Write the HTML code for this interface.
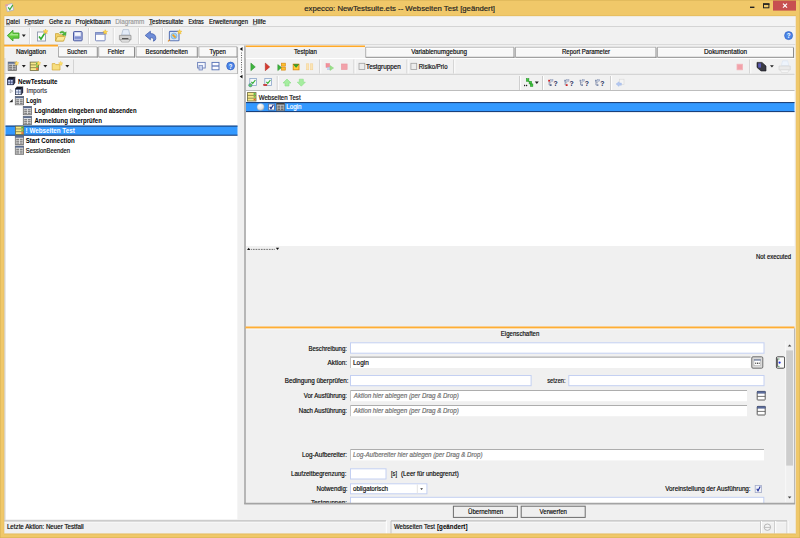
<!DOCTYPE html>
<html lang="de">
<head>
<meta charset="utf-8">
<title>expecco: NewTestsuite.ets -- Webseiten Test [geändert]</title>
<style>
html,body{margin:0;padding:0;background:#F0C869;overflow:hidden;}
body{width:800px;height:538px;font-family:"Liberation Sans",sans-serif;}
svg{display:block;position:absolute;left:0;top:0;}
svg text{font-family:"Liberation Sans",sans-serif;white-space:pre;}
</style>
</head>
<body>
<svg width="800" height="538" viewBox="0 0 800 538">
<rect x="0" y="0" width="800" height="538" fill="#F0C869" />
<rect x="4" y="16" width="792" height="518" fill="#F0F0F0" />
<text x="304.3" y="10.6" textLength="190.7" lengthAdjust="spacingAndGlyphs" fill="#222" style="font-size:8px;" stroke="#222" stroke-width="0.18" >expecco: NewTestsuite.ets -- Webseiten Test [geändert]</text>
<rect x="6.4" y="4.2" width="6.6" height="6.8" fill="#F6F6FA" stroke="#A8AEC0" stroke-width="0.7" transform="rotate(-14 9.5 7.5)"/>
<rect x="6" y="3.6" width="2.4" height="2" fill="#E8A0A0" transform="rotate(-14 9.5 7.5)"/>
<path d="M8.2 7.4 L9.8 9.6 L12.8 5" fill="none" stroke="#3DAA3D" stroke-width="1.3" />
<rect x="773" y="0" width="23" height="10.6" fill="#C75050" />
<path d="M783 3.6 L787 7.6 M787 3.6 L783 7.6" fill="none" stroke="#FFFFFF" stroke-width="1.2" />
<rect x="750" y="6.6" width="4.4" height="1.4" fill="#222" />
<rect x="763.5" y="3.8" width="5.4" height="4" fill="none" stroke="#222" stroke-width="1" />
<line x1="763" y1="4.2" x2="769.4" y2="4.2" stroke="#222" stroke-width="1.4" />
<rect x="4" y="16" width="792" height="10.5" fill="#F3F3F3" />
<line x1="4" y1="26.5" x2="796" y2="26.5" stroke="#D4D4D4" stroke-width="1" />
<text x="6" y="23.6" textLength="13.75" lengthAdjust="spacingAndGlyphs" fill="#0a0a0a" style="font-size:7px;" stroke="#0a0a0a" stroke-width="0.18" >Datei</text>
<text x="24.5" y="23.6" textLength="19.5" lengthAdjust="spacingAndGlyphs" fill="#0a0a0a" style="font-size:7px;" stroke="#0a0a0a" stroke-width="0.18" >Fenster</text>
<text x="49" y="23.6" textLength="21.6" lengthAdjust="spacingAndGlyphs" fill="#0a0a0a" style="font-size:7px;" stroke="#0a0a0a" stroke-width="0.18" >Gehe zu</text>
<text x="75.5" y="23.6" textLength="35.1" lengthAdjust="spacingAndGlyphs" fill="#0a0a0a" style="font-size:7px;" stroke="#0a0a0a" stroke-width="0.18" >Projektbaum</text>
<text x="115.25" y="23.6" textLength="29.15" lengthAdjust="spacingAndGlyphs" fill="#9a9a9a" style="font-size:7px;" stroke="#9a9a9a" stroke-width="0.18" >Diagramm</text>
<text x="149" y="23.6" textLength="34.5" lengthAdjust="spacingAndGlyphs" fill="#0a0a0a" style="font-size:7px;" stroke="#0a0a0a" stroke-width="0.18" >Testresultate</text>
<text x="188.5" y="23.6" textLength="15.25" lengthAdjust="spacingAndGlyphs" fill="#0a0a0a" style="font-size:7px;" stroke="#0a0a0a" stroke-width="0.18" >Extras</text>
<text x="209" y="23.6" textLength="39" lengthAdjust="spacingAndGlyphs" fill="#0a0a0a" style="font-size:7px;" stroke="#0a0a0a" stroke-width="0.18" >Erweiterungen</text>
<text x="252.75" y="23.6" textLength="13.25" lengthAdjust="spacingAndGlyphs" fill="#0a0a0a" style="font-size:7px;" stroke="#0a0a0a" stroke-width="0.18" >Hilfe</text>
<line x1="6" y1="24.7" x2="10" y2="24.7" stroke="#333" stroke-width="0.6" />
<line x1="27.4" y1="24.7" x2="30.6" y2="24.7" stroke="#333" stroke-width="0.6" />
<line x1="149" y1="24.7" x2="152.4" y2="24.7" stroke="#333" stroke-width="0.6" />
<line x1="252.75" y1="24.7" x2="256.6" y2="24.7" stroke="#333" stroke-width="0.6" />
<rect x="4" y="27" width="792" height="17.5" fill="#F1F1F1" />
<line x1="4" y1="44.5" x2="796" y2="44.5" stroke="#DADADA" stroke-width="1" />
<line x1="29.5" y1="28" x2="29.5" y2="44" stroke="#D8D8D8" stroke-width="1" />
<line x1="30.5" y1="28" x2="30.5" y2="44" stroke="#FFFFFF" stroke-width="1" />
<line x1="88.5" y1="28" x2="88.5" y2="44" stroke="#D8D8D8" stroke-width="1" />
<line x1="89.5" y1="28" x2="89.5" y2="44" stroke="#FFFFFF" stroke-width="1" />
<line x1="113.3" y1="28" x2="113.3" y2="44" stroke="#D8D8D8" stroke-width="1" />
<line x1="114.3" y1="28" x2="114.3" y2="44" stroke="#FFFFFF" stroke-width="1" />
<line x1="138.5" y1="28" x2="138.5" y2="44" stroke="#D8D8D8" stroke-width="1" />
<line x1="139.5" y1="28" x2="139.5" y2="44" stroke="#FFFFFF" stroke-width="1" />
<line x1="162.5" y1="28" x2="162.5" y2="44" stroke="#D8D8D8" stroke-width="1" />
<line x1="163.5" y1="28" x2="163.5" y2="44" stroke="#FFFFFF" stroke-width="1" />
<path d="M7.3 35.6 L13 30.2 L13 33 L19 33 L19 38.2 L13 38.2 L13 41 Z" fill="#62CC3E" stroke="#3C9C28" stroke-width="0.8" stroke-linejoin="round"/>
<path d="M9 35.4 L12.4 32.2 L12.4 34 L18 34 L18 35.4 Z" fill="#A6E88A" />
<path d="M21.8 34.4 L25.8 34.4 L23.8 37.1 Z" fill="#222" />
<rect x="37.5" y="32" width="8" height="9" fill="#FBFBFD" stroke="#8E98AC" stroke-width="0.9" />
<path d="M39 36.4 L41 39 L44.6 33.4" fill="none" stroke="#2FAE2F" stroke-width="1.6" />
<polygon points="45.60,29.00 46.29,30.65 48.07,30.80 46.71,31.96 47.13,33.70 45.60,32.77 44.07,33.70 44.49,31.96 43.13,30.80 44.91,30.65" fill="#FFD84A" stroke="#E0A820" stroke-width="0.4"/>
<path d="M55.5 41 L55.5 33.6 L58.6 33.6 L59.4 34.8 L63.6 34.8 L63.6 41 Z" fill="#F3D36B" stroke="#C9A12E" stroke-width="0.7" />
<path d="M55.5 41 L57.4 36.4 L65.4 36.4 L63.6 41 Z" fill="#FBE89A" stroke="#C9A12E" stroke-width="0.7" />
<path d="M59.6 32.6 Q62.6 29.6 65 32.8 L66.2 31.8 L65.8 35.6 L62.2 34.8 L63.6 33.8 Q62.2 32 60.6 33.2 Z" fill="#4DBB3C" stroke="#2F8E27" stroke-width="0.4" />
<rect x="73.5" y="31.6" width="8.6" height="9.2" fill="#B4BEE6" stroke="#4A5AA2" stroke-width="1" rx="0.8"/>
<rect x="75" y="32.4" width="5.6" height="3.4" fill="#F4F6FC" />
<rect x="74.6" y="36.6" width="6.4" height="2.2" fill="#7F8FCF" />
<rect x="95.5" y="32.6" width="9.6" height="8.2" fill="#FCFCFE" stroke="#6E7FB8" stroke-width="0.9" rx="0.8"/>
<rect x="95.5" y="32.6" width="9.6" height="1.8" fill="#8FA0D4" stroke="#6E7FB8" stroke-width="0.5" />
<polygon points="105.20,29.70 105.86,31.29 107.58,31.43 106.27,32.55 106.67,34.22 105.20,33.33 103.73,34.22 104.13,32.55 102.82,31.43 104.54,31.29" fill="#FFD84A" stroke="#E0A820" stroke-width="0.4"/>
<path d="M121.6 35 L123 29.6 L128.6 29.6 L129.8 35 Z" fill="#E4ECF8" stroke="#9FB0C8" stroke-width="0.6" />
<path d="M119.4 35.4 L131 35.4 L131 39.8 L119.4 39.8 Z" fill="#D2D2D2" stroke="#8C8C8C" stroke-width="0.7" stroke-linejoin="round"/>
<path d="M120.4 39.8 L130 39.8 L128.8 42 L121.6 42 Z" fill="#F2F2F2" stroke="#8C8C8C" stroke-width="0.6" />
<rect x="122" y="38" width="6.4" height="1.2" fill="#555" />
<path d="M145.2 35.4 L150.4 31.2 L150.4 33.6 Q156 33.6 155.8 38.6 Q155.6 40.6 153.4 41.2 Q154.6 37.6 150.4 37.6 L150.4 39.8 Z" fill="#6D8CD8" stroke="#3C57A8" stroke-width="0.7" stroke-linejoin="round"/>
<rect x="169.4" y="31.4" width="9.6" height="9.4" fill="#DCE8F6" stroke="#5F79B8" stroke-width="1.1" rx="0.8"/>
<circle cx="174" cy="36" r="3" fill="#9FD0F0" stroke="#6AA0D0" stroke-width="0.5"/>
<path d="M172.6 34.6 L175.6 37.6" fill="none" stroke="#F0A020" stroke-width="1.6" />
<polygon points="179.60,29.50 180.26,31.09 181.98,31.23 180.67,32.35 181.07,34.02 179.60,33.12 178.13,34.02 178.53,32.35 177.22,31.23 178.94,31.09" fill="#FFD84A" stroke="#E0A820" stroke-width="0.4"/>
<path d="M168 41.4 L170 39.6" fill="none" stroke="#E08A20" stroke-width="1.2" />
<circle cx="788.6" cy="35.6" r="4" fill="#4C86E8" stroke="#2F5FC0" stroke-width="0.7"/>
<text x="786.7" y="38.2" textLength="3.8" lengthAdjust="spacingAndGlyphs" fill="#FFFFFF" style="font-size:7px;font-weight:bold;" >?</text>
<rect x="4" y="45" width="54" height="13.5" fill="#F1F1F1" />
<line x1="4" y1="45.8" x2="58" y2="45.8" stroke="#FFA928" stroke-width="1.9" />
<line x1="4" y1="47.2" x2="58" y2="47.2" stroke="#FAFAFA" stroke-width="1" />
<rect x="58.5" y="47.1" width="38.8" height="9.899999999999999" fill="#F8F8F8" rx="0.8"/>
<line x1="58.5" y1="46.9" x2="97.3" y2="46.9" stroke="#B4B4B4" stroke-width="1" />
<line x1="58.5" y1="46.6" x2="58.5" y2="57.0" stroke="#B0B0B0" stroke-width="1" />
<line x1="59" y1="47.9" x2="96.3" y2="47.9" stroke="#FFFFFF" stroke-width="0.8" />
<line x1="58.5" y1="57.0" x2="97.8" y2="57.0" stroke="#8C8C8C" stroke-width="1" />
<line x1="97.3" y1="47.1" x2="97.3" y2="57.5" stroke="#8C8C8C" stroke-width="1" />
<rect x="98.7" y="47.1" width="35.8" height="9.899999999999999" fill="#F8F8F8" rx="0.8"/>
<line x1="98.7" y1="46.9" x2="134.5" y2="46.9" stroke="#B4B4B4" stroke-width="1" />
<line x1="98.7" y1="46.6" x2="98.7" y2="57.0" stroke="#B0B0B0" stroke-width="1" />
<line x1="99.2" y1="47.9" x2="133.5" y2="47.9" stroke="#FFFFFF" stroke-width="0.8" />
<line x1="98.7" y1="57.0" x2="135" y2="57.0" stroke="#8C8C8C" stroke-width="1" />
<line x1="134.5" y1="47.1" x2="134.5" y2="57.5" stroke="#8C8C8C" stroke-width="1" />
<rect x="136.1" y="47.1" width="61.20000000000002" height="9.899999999999999" fill="#F8F8F8" rx="0.8"/>
<line x1="136.1" y1="46.9" x2="197.3" y2="46.9" stroke="#B4B4B4" stroke-width="1" />
<line x1="136.1" y1="46.6" x2="136.1" y2="57.0" stroke="#B0B0B0" stroke-width="1" />
<line x1="136.6" y1="47.9" x2="196.3" y2="47.9" stroke="#FFFFFF" stroke-width="0.8" />
<line x1="136.1" y1="57.0" x2="197.8" y2="57.0" stroke="#8C8C8C" stroke-width="1" />
<line x1="197.3" y1="47.1" x2="197.3" y2="57.5" stroke="#8C8C8C" stroke-width="1" />
<rect x="198.9" y="47.1" width="38.19999999999999" height="9.899999999999999" fill="#F8F8F8" rx="0.8"/>
<line x1="198.9" y1="46.9" x2="237.1" y2="46.9" stroke="#B4B4B4" stroke-width="1" />
<line x1="198.9" y1="46.6" x2="198.9" y2="57.0" stroke="#B0B0B0" stroke-width="1" />
<line x1="199.4" y1="47.9" x2="236.1" y2="47.9" stroke="#FFFFFF" stroke-width="0.8" />
<line x1="198.9" y1="57.0" x2="237.6" y2="57.0" stroke="#8C8C8C" stroke-width="1" />
<line x1="237.1" y1="47.1" x2="237.1" y2="57.5" stroke="#8C8C8C" stroke-width="1" />
<text x="16" y="54" textLength="30" lengthAdjust="spacingAndGlyphs" fill="#0a0a0a" style="font-size:7px;" stroke="#0a0a0a" stroke-width="0.18" >Navigation</text>
<text x="67" y="54" textLength="20" lengthAdjust="spacingAndGlyphs" fill="#0a0a0a" style="font-size:7px;" stroke="#0a0a0a" stroke-width="0.18" >Suchen</text>
<text x="107.75" y="54" textLength="16.65" lengthAdjust="spacingAndGlyphs" fill="#0a0a0a" style="font-size:7px;" stroke="#0a0a0a" stroke-width="0.18" >Fehler</text>
<text x="145.6" y="54" textLength="42.4" lengthAdjust="spacingAndGlyphs" fill="#0a0a0a" style="font-size:7px;" stroke="#0a0a0a" stroke-width="0.18" >Besonderheiten</text>
<text x="209.4" y="54" textLength="16.6" lengthAdjust="spacingAndGlyphs" fill="#0a0a0a" style="font-size:7px;" stroke="#0a0a0a" stroke-width="0.18" >Typen</text>
<rect x="4" y="58.5" width="234" height="15.5" fill="#F1F1F1" />
<line x1="58" y1="58.5" x2="238" y2="58.5" stroke="#FAFAFA" stroke-width="1" />
<line x1="4" y1="73.5" x2="238" y2="73.5" stroke="#C8C8C8" stroke-width="1" />
<line x1="237.5" y1="58" x2="237.5" y2="74" stroke="#B8B8B8" stroke-width="1" />
<line x1="73.5" y1="59.5" x2="73.5" y2="73" stroke="#D4D4D4" stroke-width="1" />
<rect x="8.2" y="62.1" width="8.4" height="8.4" fill="#D4D4D4" stroke="#6A6A6A" stroke-width="0.8" />
<rect x="8.2" y="62.1" width="8.4" height="1.7" fill="#56688C" />
<line x1="8.6" y1="64.2" x2="16.200000000000003" y2="64.2" stroke="#C8D0E0" stroke-width="0.5" />
<rect x="9.1" y="64.8" width="2.9000000000000004" height="1.3333333333333333" fill="#7A7A7A" />
<rect x="9.1" y="66.63333333333333" width="2.9000000000000004" height="1.3333333333333333" fill="#7A7A7A" />
<rect x="9.1" y="68.46666666666667" width="2.9000000000000004" height="1.3333333333333333" fill="#7A7A7A" />
<rect x="12.8" y="64.8" width="2.9000000000000004" height="1.3333333333333333" fill="#7A7A7A" />
<rect x="12.8" y="66.63333333333333" width="2.9000000000000004" height="1.3333333333333333" fill="#7A7A7A" />
<rect x="12.8" y="68.46666666666667" width="2.9000000000000004" height="1.3333333333333333" fill="#7A7A7A" />
<polygon points="16.70,61.10 17.31,62.56 18.89,62.69 17.68,63.72 18.05,65.26 16.70,64.44 15.35,65.26 15.72,63.72 14.51,62.69 16.09,62.56" fill="#FFE269" stroke="#F0C040" stroke-width="0.4"/>
<path d="M21.8 64.9 L25.8 64.9 L23.8 67.60000000000001 Z" fill="#222" />
<rect x="30.2" y="62.1" width="8.3" height="8.3" fill="#F6E889" stroke="#6E6A3A" stroke-width="0.8" />
<line x1="30.2" y1="64.86666666666667" x2="38.5" y2="64.86666666666667" stroke="#6E6A3A" stroke-width="0.7" />
<line x1="30.2" y1="67.63333333333334" x2="38.5" y2="67.63333333333334" stroke="#6E6A3A" stroke-width="0.7" />
<rect x="36.1" y="62.7" width="1.9" height="1.566666666666667" fill="#3FB83F" />
<rect x="36.1" y="65.46666666666667" width="1.9" height="1.566666666666667" fill="#7AC43C" />
<rect x="36.1" y="68.23333333333333" width="1.9" height="1.566666666666667" fill="#E8622A" />
<polygon points="38.70,61.10 39.31,62.56 40.89,62.69 39.68,63.72 40.05,65.26 38.70,64.44 37.35,65.26 37.72,63.72 36.51,62.69 38.09,62.56" fill="#FFE269" stroke="#F0C040" stroke-width="0.4"/>
<path d="M43.3 64.9 L47.3 64.9 L45.3 67.60000000000001 Z" fill="#222" />
<path d="M52.2 70 L52.2 63.6 L55 63.6 L55.8 64.6 L60 64.6 L60 70 Z" fill="#F7DE7E" stroke="#D2A838" stroke-width="0.7" />
<polygon points="60.70,61.30 61.31,62.76 62.89,62.89 61.68,63.92 62.05,65.46 60.70,64.64 59.35,65.46 59.72,63.92 58.51,62.89 60.09,62.76" fill="#FFE269" stroke="#F0C040" stroke-width="0.4"/>
<path d="M65.3 64.9 L69.3 64.9 L67.3 67.60000000000001 Z" fill="#222" />
<rect x="197.6" y="62.4" width="7.6" height="5.6" fill="#F4F6FC" stroke="#6A7FB8" stroke-width="0.9" />
<rect x="199" y="65.6" width="3.4" height="4.4" fill="#C9D4F0" stroke="#6A7FB8" stroke-width="0.7" />
<rect x="212" y="62.4" width="7" height="7.4" fill="#FBFBFF" stroke="#5470B4" stroke-width="0.9" />
<line x1="212" y1="66" x2="219" y2="66" stroke="#5470B4" stroke-width="1.2" />
<circle cx="230.6" cy="66" r="3.9" fill="#4C86E8" stroke="#2F5FC0" stroke-width="0.7"/>
<text x="228.8" y="68.5" textLength="3.6" lengthAdjust="spacingAndGlyphs" fill="#FFFFFF" style="font-size:6.5px;font-weight:bold;" >?</text>
<rect x="5.5" y="74.3" width="232" height="445" fill="#FFFFFF" />
<line x1="4.9" y1="58" x2="4.9" y2="520" stroke="#CFCFCF" stroke-width="1" />
<line x1="237.6" y1="74" x2="237.6" y2="519.5" stroke="#F4F4F4" stroke-width="0.8" />
<rect x="5.5" y="125.7" width="232" height="9.7" fill="#3399FF" />
<line x1="5.5" y1="126.1" x2="237.5" y2="126.1" stroke="#17386E" stroke-width="1" />
<line x1="5.5" y1="135.2" x2="237.5" y2="135.2" stroke="#17386E" stroke-width="1" />
<path d="M8.9 76.9 L15.1 76.9 L13.5 79.10000000000001 L7.3 79.10000000000001 Z" fill="#151822" stroke="#151822" stroke-width="0.3" />
<path d="M13.5 79.10000000000001 L15.1 76.9 L15.1 82.7 L13.5 84.9 Z" fill="#2A3150" stroke="#151822" stroke-width="0.3" />
<rect x="7.3" y="79.10000000000001" width="6.2" height="5.8" fill="#2E3C6E" stroke="#151822" stroke-width="0.4" />
<rect x="8.1" y="80.0" width="2" height="1.7" fill="#C4CFEE" />
<rect x="8.1" y="82.5" width="2" height="1.7" fill="#C4CFEE" />
<rect x="10.7" y="80.0" width="2" height="1.7" fill="#C4CFEE" />
<rect x="10.7" y="82.5" width="2" height="1.7" fill="#C4CFEE" />
<text x="17.9" y="84" textLength="39.7" lengthAdjust="spacingAndGlyphs" fill="#000" style="font-size:7px;font-weight:bold;" >NewTestsuite</text>
<path d="M10.2 89.39999999999999 L12.6 91.1 L10.2 92.8 Z" fill="#FFFFFF" stroke="#A0A0A0" stroke-width="0.6" />
<path d="M16.8 86.8 L23.0 86.8 L21.4 89.0 L15.2 89.0 Z" fill="#151822" stroke="#151822" stroke-width="0.3" />
<path d="M21.4 89.0 L23.0 86.8 L23.0 92.6 L21.4 94.8 Z" fill="#2A3150" stroke="#151822" stroke-width="0.3" />
<rect x="15.2" y="89.0" width="6.2" height="5.8" fill="#5C7098" stroke="#151822" stroke-width="0.4" />
<rect x="16.0" y="89.89999999999999" width="2" height="1.7" fill="#E4EAF8" />
<rect x="16.0" y="92.39999999999999" width="2" height="1.7" fill="#E4EAF8" />
<rect x="18.6" y="89.89999999999999" width="2" height="1.7" fill="#E4EAF8" />
<rect x="18.6" y="92.39999999999999" width="2" height="1.7" fill="#E4EAF8" />
<text x="26.5" y="93" textLength="20.6" lengthAdjust="spacingAndGlyphs" fill="#3A3A44" style="font-size:7px;" stroke="#3A3A44" stroke-width="0.18" >Imports</text>
<path d="M12.5 99.5 L12.5 102.10000000000001 L9.7 102.10000000000001 Z" fill="#222" stroke="#222" stroke-width="0.4" />
<rect x="15.3" y="96.5" width="8.3" height="8.3" fill="#E8E8E8" stroke="#6A6A6A" stroke-width="0.8" />
<rect x="15.3" y="96.5" width="8.3" height="1.7" fill="#56688C" />
<line x1="15.700000000000001" y1="98.6" x2="23.200000000000003" y2="98.6" stroke="#C8D0E0" stroke-width="0.5" />
<rect x="16.2" y="99.2" width="2.8500000000000005" height="1.3" fill="#848484" />
<rect x="16.2" y="101.0" width="2.8500000000000005" height="1.3" fill="#848484" />
<rect x="16.2" y="102.8" width="2.8500000000000005" height="1.3" fill="#848484" />
<rect x="19.85" y="99.2" width="2.8500000000000005" height="1.3" fill="#848484" />
<rect x="19.85" y="101.0" width="2.8500000000000005" height="1.3" fill="#848484" />
<rect x="19.85" y="102.8" width="2.8500000000000005" height="1.3" fill="#848484" />
<text x="26.35" y="103" textLength="15.05" lengthAdjust="spacingAndGlyphs" fill="#000" style="font-size:7px;font-weight:bold;" >Login</text>
<rect x="23.3" y="106.39999999999999" width="8.3" height="8.3" fill="#E8E8E8" stroke="#6A6A6A" stroke-width="0.8" />
<rect x="23.3" y="106.39999999999999" width="8.3" height="1.7" fill="#56688C" />
<line x1="23.7" y1="108.49999999999999" x2="31.200000000000003" y2="108.49999999999999" stroke="#C8D0E0" stroke-width="0.5" />
<rect x="24.2" y="109.1" width="2.8500000000000005" height="1.3" fill="#848484" />
<rect x="24.2" y="110.89999999999999" width="2.8500000000000005" height="1.3" fill="#848484" />
<rect x="24.2" y="112.69999999999999" width="2.8500000000000005" height="1.3" fill="#848484" />
<rect x="27.85" y="109.1" width="2.8500000000000005" height="1.3" fill="#848484" />
<rect x="27.85" y="110.89999999999999" width="2.8500000000000005" height="1.3" fill="#848484" />
<rect x="27.85" y="112.69999999999999" width="2.8500000000000005" height="1.3" fill="#848484" />
<text x="34.4" y="113" textLength="102.2" lengthAdjust="spacingAndGlyphs" fill="#000" style="font-size:7px;font-weight:bold;" >Logindaten eingeben und absenden</text>
<rect x="23.3" y="116.3" width="8.3" height="8.3" fill="#E8E8E8" stroke="#6A6A6A" stroke-width="0.8" />
<rect x="23.3" y="116.3" width="8.3" height="1.7" fill="#56688C" />
<line x1="23.7" y1="118.39999999999999" x2="31.200000000000003" y2="118.39999999999999" stroke="#C8D0E0" stroke-width="0.5" />
<rect x="24.2" y="119.0" width="2.8500000000000005" height="1.3" fill="#848484" />
<rect x="24.2" y="120.8" width="2.8500000000000005" height="1.3" fill="#848484" />
<rect x="24.2" y="122.6" width="2.8500000000000005" height="1.3" fill="#848484" />
<rect x="27.85" y="119.0" width="2.8500000000000005" height="1.3" fill="#848484" />
<rect x="27.85" y="120.8" width="2.8500000000000005" height="1.3" fill="#848484" />
<rect x="27.85" y="122.6" width="2.8500000000000005" height="1.3" fill="#848484" />
<text x="34.4" y="123" textLength="67.6" lengthAdjust="spacingAndGlyphs" fill="#000" style="font-size:7px;font-weight:bold;" >Anmeldung überprüfen</text>
<rect x="15.4" y="126.2" width="8.3" height="8.2" fill="#F6E889" stroke="#6E6A3A" stroke-width="0.8" />
<line x1="15.4" y1="128.93333333333334" x2="23.700000000000003" y2="128.93333333333334" stroke="#6E6A3A" stroke-width="0.7" />
<line x1="15.4" y1="131.66666666666666" x2="23.700000000000003" y2="131.66666666666666" stroke="#6E6A3A" stroke-width="0.7" />
<rect x="21.300000000000004" y="126.8" width="1.9" height="1.533333333333333" fill="#3FB83F" />
<rect x="21.300000000000004" y="129.53333333333333" width="1.9" height="1.533333333333333" fill="#7AC43C" />
<rect x="21.300000000000004" y="132.26666666666665" width="1.9" height="1.533333333333333" fill="#E8622A" />
<text x="25.6" y="133" textLength="49.15" lengthAdjust="spacingAndGlyphs" fill="#FFFFFF" style="font-size:7px;font-weight:bold;" >! Webseiten Test</text>
<rect x="15.3" y="136.10000000000002" width="8.3" height="8.3" fill="#E8E8E8" stroke="#6A6A6A" stroke-width="0.8" />
<rect x="15.3" y="136.10000000000002" width="8.3" height="1.7" fill="#56688C" />
<line x1="15.700000000000001" y1="138.20000000000002" x2="23.200000000000003" y2="138.20000000000002" stroke="#C8D0E0" stroke-width="0.5" />
<rect x="16.2" y="138.8" width="2.8500000000000005" height="1.3" fill="#848484" />
<rect x="16.2" y="140.60000000000002" width="2.8500000000000005" height="1.3" fill="#848484" />
<rect x="16.2" y="142.4" width="2.8500000000000005" height="1.3" fill="#848484" />
<rect x="19.85" y="138.8" width="2.8500000000000005" height="1.3" fill="#848484" />
<rect x="19.85" y="140.60000000000002" width="2.8500000000000005" height="1.3" fill="#848484" />
<rect x="19.85" y="142.4" width="2.8500000000000005" height="1.3" fill="#848484" />
<text x="25.75" y="143" textLength="49.0" lengthAdjust="spacingAndGlyphs" fill="#000" style="font-size:7px;font-weight:bold;" >Start Connection</text>
<rect x="15.3" y="146.0" width="8.3" height="8.3" fill="#E8E8E8" stroke="#6A6A6A" stroke-width="0.8" />
<rect x="15.3" y="146.0" width="8.3" height="1.7" fill="#56688C" />
<line x1="15.700000000000001" y1="148.1" x2="23.200000000000003" y2="148.1" stroke="#C8D0E0" stroke-width="0.5" />
<rect x="16.2" y="148.7" width="2.8500000000000005" height="1.3" fill="#848484" />
<rect x="16.2" y="150.5" width="2.8500000000000005" height="1.3" fill="#848484" />
<rect x="16.2" y="152.29999999999998" width="2.8500000000000005" height="1.3" fill="#848484" />
<rect x="19.85" y="148.7" width="2.8500000000000005" height="1.3" fill="#848484" />
<rect x="19.85" y="150.5" width="2.8500000000000005" height="1.3" fill="#848484" />
<rect x="19.85" y="152.29999999999998" width="2.8500000000000005" height="1.3" fill="#848484" />
<text x="25.75" y="153" textLength="44.25" lengthAdjust="spacingAndGlyphs" fill="#0a0a0a" style="font-size:7px;" stroke="#0a0a0a" stroke-width="0.18" >SessionBeenden</text>
<rect x="238.6" y="46.2" width="5.4" height="33" fill="#FAFAFA" />
<path d="M242.5 47.1 L242.5 50.9 L239.7 49 Z" fill="#111" />
<path d="M242.5 74.8 L242.5 78.4 L239.7 76.6 Z" fill="#111" />
<line x1="241.5" y1="52.6" x2="241.5" y2="74" stroke="#333" stroke-width="0.9" stroke-dasharray="0.9 1.45"/>
<line x1="245" y1="45.5" x2="245" y2="504" stroke="#A8A8A8" stroke-width="1.6" />
<rect x="245.8" y="45" width="119.19999999999999" height="13.5" fill="#F1F1F1" />
<line x1="245.8" y1="46.4" x2="365" y2="46.4" stroke="#FFA928" stroke-width="1.9" />
<line x1="245.8" y1="47.800000000000004" x2="365" y2="47.800000000000004" stroke="#FAFAFA" stroke-width="1" />
<rect x="365.7" y="47.5" width="148.3" height="9.799999999999997" fill="#F8F8F8" rx="0.8"/>
<line x1="365.7" y1="47.3" x2="514.0" y2="47.3" stroke="#B4B4B4" stroke-width="1" />
<line x1="365.7" y1="47" x2="365.7" y2="57.3" stroke="#B0B0B0" stroke-width="1" />
<line x1="366.2" y1="48.3" x2="513.0" y2="48.3" stroke="#FFFFFF" stroke-width="0.8" />
<line x1="365.7" y1="57.3" x2="514.5" y2="57.3" stroke="#8C8C8C" stroke-width="1" />
<line x1="514.0" y1="47.5" x2="514.0" y2="57.8" stroke="#8C8C8C" stroke-width="1" />
<rect x="515.5" y="47.5" width="140.5" height="9.799999999999997" fill="#F8F8F8" rx="0.8"/>
<line x1="515.5" y1="47.3" x2="656.0" y2="47.3" stroke="#B4B4B4" stroke-width="1" />
<line x1="515.5" y1="47" x2="515.5" y2="57.3" stroke="#B0B0B0" stroke-width="1" />
<line x1="516" y1="48.3" x2="655.0" y2="48.3" stroke="#FFFFFF" stroke-width="0.8" />
<line x1="515.5" y1="57.3" x2="656.5" y2="57.3" stroke="#8C8C8C" stroke-width="1" />
<line x1="656.0" y1="47.5" x2="656.0" y2="57.8" stroke="#8C8C8C" stroke-width="1" />
<rect x="657.5" y="47.5" width="136" height="9.799999999999997" fill="#F8F8F8" rx="0.8"/>
<line x1="657.5" y1="47.3" x2="793.5" y2="47.3" stroke="#B4B4B4" stroke-width="1" />
<line x1="657.5" y1="47" x2="657.5" y2="57.3" stroke="#B0B0B0" stroke-width="1" />
<line x1="658" y1="48.3" x2="792.5" y2="48.3" stroke="#FFFFFF" stroke-width="0.8" />
<line x1="657.5" y1="57.3" x2="794" y2="57.3" stroke="#8C8C8C" stroke-width="1" />
<line x1="793.5" y1="47.5" x2="793.5" y2="57.8" stroke="#8C8C8C" stroke-width="1" />
<text x="294" y="54" textLength="22.9" lengthAdjust="spacingAndGlyphs" fill="#0a0a0a" style="font-size:7px;" stroke="#0a0a0a" stroke-width="0.18" >Testplan</text>
<text x="411.25" y="54" textLength="55.75" lengthAdjust="spacingAndGlyphs" fill="#0a0a0a" style="font-size:7px;" stroke="#0a0a0a" stroke-width="0.18" >Variablenumgebung</text>
<text x="562" y="54" textLength="48" lengthAdjust="spacingAndGlyphs" fill="#0a0a0a" style="font-size:7px;" stroke="#0a0a0a" stroke-width="0.18" >Report Parameter</text>
<text x="704" y="54" textLength="43" lengthAdjust="spacingAndGlyphs" fill="#0a0a0a" style="font-size:7px;" stroke="#0a0a0a" stroke-width="0.18" >Dokumentation</text>
<rect x="246" y="58.5" width="548.5" height="15.5" fill="#F1F1F1" />
<line x1="246" y1="58.5" x2="794.5" y2="58.5" stroke="#FFFFFF" stroke-width="1" />
<line x1="246" y1="74.3" x2="794.5" y2="74.3" stroke="#CFCFCF" stroke-width="1" />
<rect x="246" y="75" width="548.5" height="15.5" fill="#F1F1F1" />
<line x1="246" y1="90.5" x2="794.5" y2="90.5" stroke="#BDBDBD" stroke-width="1" />
<line x1="319.75" y1="59.5" x2="319.75" y2="73.5" stroke="#CCCCCC" stroke-width="1" />
<line x1="320.75" y1="59.5" x2="320.75" y2="73.5" stroke="#FFFFFF" stroke-width="1" />
<line x1="354" y1="59.5" x2="354" y2="73.5" stroke="#CCCCCC" stroke-width="1" />
<line x1="355" y1="59.5" x2="355" y2="73.5" stroke="#FFFFFF" stroke-width="1" />
<line x1="407" y1="59.5" x2="407" y2="73.5" stroke="#CCCCCC" stroke-width="1" />
<line x1="408" y1="59.5" x2="408" y2="73.5" stroke="#FFFFFF" stroke-width="1" />
<line x1="453.75" y1="59.5" x2="453.75" y2="73.5" stroke="#CCCCCC" stroke-width="1" />
<line x1="454.75" y1="59.5" x2="454.75" y2="73.5" stroke="#FFFFFF" stroke-width="1" />
<line x1="749.75" y1="59.5" x2="749.75" y2="73.5" stroke="#CCCCCC" stroke-width="1" />
<line x1="750.75" y1="59.5" x2="750.75" y2="73.5" stroke="#FFFFFF" stroke-width="1" />
<line x1="277.25" y1="76" x2="277.25" y2="90" stroke="#CCCCCC" stroke-width="1" />
<line x1="278.25" y1="76" x2="278.25" y2="90" stroke="#FFFFFF" stroke-width="1" />
<line x1="519.6" y1="76" x2="519.6" y2="90" stroke="#CCCCCC" stroke-width="1" />
<line x1="520.6" y1="76" x2="520.6" y2="90" stroke="#FFFFFF" stroke-width="1" />
<line x1="542.5" y1="76" x2="542.5" y2="90" stroke="#CCCCCC" stroke-width="1" />
<line x1="543.5" y1="76" x2="543.5" y2="90" stroke="#FFFFFF" stroke-width="1" />
<line x1="610.6" y1="76" x2="610.6" y2="90" stroke="#CCCCCC" stroke-width="1" />
<line x1="611.6" y1="76" x2="611.6" y2="90" stroke="#FFFFFF" stroke-width="1" />
<path d="M250.9 63.1 L255.3 66.9 L250.9 70.7 Z" fill="#3DB53D" stroke="#2A8A2A" stroke-width="0.5" stroke-linejoin="round"/>
<path d="M265.3 63.1 L269.7 66.9 L265.3 70.7 Z" fill="#D8382C" stroke="#A02018" stroke-width="0.5" stroke-linejoin="round"/>
<path d="M277.8 64.6 L281.6 67.6 L277.8 70.6 Z" fill="#3DB53D" stroke="#2A8A2A" stroke-width="0.5" />
<rect x="281.5" y="63.2" width="3.8" height="2.9" fill="#FFC22E" stroke="#D98A10" stroke-width="0.7" />
<rect x="281.5" y="67.2" width="3.8" height="2.9" fill="#FFC22E" stroke="#D98A10" stroke-width="0.7" />
<rect x="293.2" y="64.2" width="5.8" height="5.6" fill="#FFD23C" stroke="#E08A10" stroke-width="0.9" />
<path d="M293.6 64.4 L296.1 67.4 L298.6 64.4 Z" fill="#2FA82F" stroke="#1F7A1F" stroke-width="0.5" />
<rect x="306.4" y="63.8" width="2.4" height="6" fill="#FBE4B4" stroke="#F3CF90" stroke-width="0.5" />
<rect x="310.4" y="63.8" width="2.4" height="6" fill="#FBE4B4" stroke="#F3CF90" stroke-width="0.5" />
<rect x="326" y="63.6" width="3.6" height="3.8" fill="#F2909A" stroke="#EC8090" stroke-width="0.5" />
<rect x="327.6" y="67.4" width="2.4" height="2.4" fill="#C8D4F4" stroke="#B0C0E8" stroke-width="0.4" />
<path d="M330 65.6 L333.6 68 L330 70.4 Z" fill="#9CE08C" stroke="#84D274" stroke-width="0.5" />
<rect x="341.5" y="64" width="5.6" height="5.4" fill="#F2A2AA" stroke="#EC98A2" stroke-width="0.7" />
<rect x="359" y="63.3" width="5.8" height="6.2" fill="#ECECEC" stroke="#A0A0A0" stroke-width="0.8" />
<text x="366" y="68.8" textLength="34.75" lengthAdjust="spacingAndGlyphs" fill="#0a0a0a" style="font-size:7px;" stroke="#0a0a0a" stroke-width="0.18" >Testgruppen</text>
<rect x="410.9" y="63.3" width="5.8" height="6.2" fill="#ECECEC" stroke="#A0A0A0" stroke-width="0.8" />
<text x="418.75" y="68.8" textLength="28.75" lengthAdjust="spacingAndGlyphs" fill="#0a0a0a" style="font-size:7px;" stroke="#0a0a0a" stroke-width="0.18" >Risiko/Prio</text>
<rect x="737" y="64.2" width="5.6" height="5.6" fill="#F2A2AA" stroke="#F2B4BA" stroke-width="0.8" />
<path d="M757 62.4 L762 62.4 L766 66 L766 71 L761 71 L757 67.4 Z" fill="#3A3A44" stroke="#15151C" stroke-width="0.6" />
<rect x="758.2" y="63.4" width="2.8" height="4.2" fill="#5A5AB8" />
<path d="M770 65.2 L773.8 65.2 L771.9 67.60000000000001 Z" fill="#222" />
<path d="M781.4 65.6 L782.6 60.8 L787.6 60.8 L788.8 65.6 Z" fill="#EEF4FC" stroke="#D4E0F0" stroke-width="0.5" />
<path d="M779 66 L790.2 66 L790.2 70 L779 70 Z" fill="#EAEAEA" stroke="#D0D0D0" stroke-width="0.6" />
<path d="M780.4 70 L789 70 L787.8 72.6 L781.6 72.6 Z" fill="#F6F6F6" stroke="#D4D4D4" stroke-width="0.5" />
<rect x="249.79999999999998" y="78.4" width="6.6" height="7" fill="#F4F8FC" stroke="#8AA4C8" stroke-width="0.8" />
<path d="M251.4 81.8 L252.79999999999998 83.4 L255.4 80.0" fill="none" stroke="#2FAE2F" stroke-width="1.1" />
<circle cx="250.4" cy="85.2" r="1.7" fill="#5DC85D" stroke="#3E7A9A" stroke-width="0.5"/>
<rect x="264.8" y="78.4" width="6.6" height="7" fill="#F4F8FC" stroke="#8AA4C8" stroke-width="0.8" />
<path d="M266.40000000000003 81.8 L267.8 83.4 L270.40000000000003 80.0" fill="none" stroke="#2FAE2F" stroke-width="1.1" />
<rect x="263.6" y="84.2" width="3.4" height="1.6" fill="#E03A3A" stroke="#A02020" stroke-width="0.3" />
<path d="M287 79 L291 83 L289 83 L289 86 L285 86 L285 83 L283 83 Z" fill="#A6EDA0" stroke="#8ADF84" stroke-width="0.6" stroke-linejoin="round"/>
<path d="M301.3 86.2 L305.3 82.2 L303.3 82.2 L303.3 79.2 L299.3 79.2 L299.3 82.2 L297.3 82.2 Z" fill="#A6EDA0" stroke="#8ADF84" stroke-width="0.6" stroke-linejoin="round"/>
<path d="M524 84.4 L525.6 85.4 L524 86.4 Z M526 84.4 L527.6 85.4 L526 86.4 Z" fill="#222" />
<rect x="526.3000000000001" y="78.7" width="2.6" height="2.6" fill="#3FCB3F" stroke="#1E8A1E" stroke-width="0.5" />
<rect x="529.1" y="81.3" width="2.6" height="2.6" fill="#3FCB3F" stroke="#1E8A1E" stroke-width="0.5" />
<rect x="530.3000000000001" y="83.9" width="2.6" height="2.6" fill="#3FCB3F" stroke="#1E8A1E" stroke-width="0.5" />
<path d="M527.6 80 L531.6 85.2" fill="none" stroke="#2E9A2E" stroke-width="0.5" />
<path d="M534.8 81.4 L538.8 81.4 L536.8 84.0 Z" fill="#222" />
<rect x="548.2" y="79.80000000000001" width="1.8" height="1.8" fill="#D02020" />
<rect x="550.8000000000001" y="79.60000000000001" width="2.2" height="1.6" fill="#B8C4DC" stroke="#6C7CA0" stroke-width="0.3" />
<rect x="549.8000000000001" y="84.2" width="1.8" height="1.8" fill="#5A6A90" />
<path d="M549.1 81.60000000000001 L549.1 85.0 L549.8000000000001 85.0 M549.1 82.80000000000001 L551.2 82.80000000000001" fill="none" stroke="#50608A" stroke-width="0.5" />
<text x="553.4000000000001" y="86.0" textLength="4.2" lengthAdjust="spacingAndGlyphs" fill="#1E2E5A" style="font-size:7.4px;font-weight:bold;" >?</text>
<rect x="564.2" y="79.80000000000001" width="1.8" height="1.8" fill="#8090B0" />
<rect x="566.8000000000001" y="79.60000000000001" width="2.2" height="1.6" fill="#B8C4DC" stroke="#6C7CA0" stroke-width="0.3" />
<rect x="565.8000000000001" y="84.2" width="1.8" height="1.8" fill="#D02020" />
<path d="M565.1 81.60000000000001 L565.1 85.0 L565.8000000000001 85.0 M565.1 82.80000000000001 L567.2 82.80000000000001" fill="none" stroke="#50608A" stroke-width="0.5" />
<text x="569.4000000000001" y="86.0" textLength="4.2" lengthAdjust="spacingAndGlyphs" fill="#1E2E5A" style="font-size:7.4px;font-weight:bold;" >?</text>
<rect x="579.6" y="79.80000000000001" width="1.8" height="1.8" fill="#8090B0" />
<rect x="582.2" y="79.60000000000001" width="2.2" height="1.6" fill="#B8C4DC" stroke="#6C7CA0" stroke-width="0.3" />
<rect x="581.2" y="84.2" width="1.8" height="1.8" fill="#8090B0" />
<path d="M580.5 81.60000000000001 L580.5 85.0 L581.2 85.0 M580.5 82.80000000000001 L582.6 82.80000000000001" fill="none" stroke="#50608A" stroke-width="0.5" />
<text x="584.8000000000001" y="86.0" textLength="4.2" lengthAdjust="spacingAndGlyphs" fill="#1E2E5A" style="font-size:7.4px;font-weight:bold;" >?</text>
<rect x="595" y="79.80000000000001" width="1.8" height="1.8" fill="#8090B0" />
<rect x="597.6" y="79.60000000000001" width="2.2" height="1.6" fill="#B8C4DC" stroke="#6C7CA0" stroke-width="0.3" />
<rect x="596.6" y="84.2" width="1.8" height="1.8" fill="#8090B0" />
<path d="M595.9 81.60000000000001 L595.9 85.0 L596.6 85.0 M595.9 82.80000000000001 L598 82.80000000000001" fill="none" stroke="#50608A" stroke-width="0.5" />
<text x="600.2" y="86.0" textLength="4.2" lengthAdjust="spacingAndGlyphs" fill="#1E2E5A" style="font-size:7.4px;font-weight:bold;" >?</text>
<rect x="619.6" y="79.2" width="4.4" height="5.4" fill="#F4F4F4" stroke="#D8D8D8" stroke-width="0.6" />
<path d="M616 84 L619 81.8 L619 83 L621.4 83 L621.4 85.2 L619 85.2 L619 86.4 Z" fill="#B4C8F0" stroke="#A0B8E8" stroke-width="0.4" />
<rect x="246" y="91" width="548.5" height="155" fill="#FFFFFF" />
<rect x="247.4" y="92.6" width="8.6" height="8.4" fill="#F6E889" stroke="#6E6A3A" stroke-width="0.8" />
<line x1="247.4" y1="95.39999999999999" x2="256.0" y2="95.39999999999999" stroke="#6E6A3A" stroke-width="0.7" />
<line x1="247.4" y1="98.19999999999999" x2="256.0" y2="98.19999999999999" stroke="#6E6A3A" stroke-width="0.7" />
<rect x="253.6" y="93.19999999999999" width="1.9" height="1.6000000000000003" fill="#3FB83F" />
<rect x="253.6" y="95.99999999999999" width="1.9" height="1.6000000000000003" fill="#7AC43C" />
<rect x="253.6" y="98.79999999999998" width="1.9" height="1.6000000000000003" fill="#E8622A" />
<text x="258.75" y="99.5" textLength="41.85" lengthAdjust="spacingAndGlyphs" fill="#0a0a0a" style="font-size:7px;" stroke="#0a0a0a" stroke-width="0.18" >Webseiten Test</text>
<rect x="246" y="102.3" width="548.5" height="9.6" fill="#3399FF" />
<line x1="246" y1="102.6" x2="794.5" y2="102.6" stroke="#17386E" stroke-width="1" />
<line x1="246" y1="111.6" x2="794.5" y2="111.6" stroke="#17386E" stroke-width="1" />
<defs><radialGradient id="ball" cx="0.4" cy="0.3" r="0.8"><stop offset="0" stop-color="#FFFFFF"/><stop offset="0.6" stop-color="#E4E4E4"/><stop offset="1" stop-color="#9C9C9C"/></radialGradient></defs>
<circle cx="260.6" cy="107" r="3.6" fill="url(#ball)" stroke="#8AA8C8" stroke-width="0.4"/>
<rect x="268.4" y="104" width="6" height="6" fill="#F4F6FA" stroke="#5A6C90" stroke-width="0.8" />
<path d="M269.8 106.8 L271 108.6 L273.4 104.8" fill="none" stroke="#1E2E8A" stroke-width="1.2" />
<rect x="276.6" y="103" width="7.8" height="7.8" fill="#BEBEBE" stroke="#6A6A6A" stroke-width="0.8" />
<rect x="276.6" y="103" width="7.8" height="1.7" fill="#3E3E3E" />
<line x1="277.0" y1="105.1" x2="284.00000000000006" y2="105.1" stroke="#C8D0E0" stroke-width="0.5" />
<rect x="277.5" y="105.7" width="2.5999999999999996" height="1.133333333333333" fill="#6A6A6A" />
<rect x="277.5" y="107.33333333333334" width="2.5999999999999996" height="1.133333333333333" fill="#6A6A6A" />
<rect x="277.5" y="108.96666666666667" width="2.5999999999999996" height="1.133333333333333" fill="#6A6A6A" />
<rect x="280.9" y="105.7" width="2.5999999999999996" height="1.133333333333333" fill="#6A6A6A" />
<rect x="280.9" y="107.33333333333334" width="2.5999999999999996" height="1.133333333333333" fill="#6A6A6A" />
<rect x="280.9" y="108.96666666666667" width="2.5999999999999996" height="1.133333333333333" fill="#6A6A6A" />
<text x="286.2" y="108.9" textLength="15.3" lengthAdjust="spacingAndGlyphs" fill="#FFFFFF" style="font-size:7px;" stroke="#FFFFFF" stroke-width="0.18" >Login</text>
<rect x="246" y="246" width="548.5" height="80.5" fill="#F0F0F0" />
<path d="M247 250 L250.4 250 L248.7 247.8 Z" fill="#111" />
<path d="M275.8 247.8 L279.2 247.8 L277.5 250 Z" fill="#111" />
<line x1="251.4" y1="249.4" x2="275" y2="249.4" stroke="#333" stroke-width="1" stroke-dasharray="0.7 0.9"/>
<text x="756" y="258.6" textLength="35" lengthAdjust="spacingAndGlyphs" fill="#0a0a0a" style="font-size:6.4px;" stroke="#0a0a0a" stroke-width="0.18" >Not executed</text>
<rect x="246" y="327" width="548.5" height="176.5" fill="#F0F0F0" />
<line x1="245.5" y1="327.6" x2="794.5" y2="327.6" stroke="#FFAE34" stroke-width="2.1" />
<line x1="246" y1="329" x2="794.5" y2="329" stroke="#FAFAFA" stroke-width="1" />
<line x1="794.8" y1="328.4" x2="794.8" y2="504" stroke="#A0A0A0" stroke-width="1" />
<text x="500.8" y="335.8" textLength="38.6" lengthAdjust="spacingAndGlyphs" fill="#0a0a0a" style="font-size:7px;" stroke="#0a0a0a" stroke-width="0.18" >Eigenschaften</text>
<text x="308.5" y="350.6" textLength="38.5" lengthAdjust="spacingAndGlyphs" fill="#0a0a0a" style="font-size:7px;" stroke="#0a0a0a" stroke-width="0.18" >Beschreibung:</text>
<rect x="350.5" y="342.8" width="413.5" height="10.399999999999977" fill="#FFFFFF" stroke="#C4D0F2" stroke-width="1" />
<text x="327.6" y="364.8" textLength="19.4" lengthAdjust="spacingAndGlyphs" fill="#0a0a0a" style="font-size:7px;" stroke="#0a0a0a" stroke-width="0.18" >Aktion:</text>
<rect x="350" y="356.6" width="400.6" height="11.399999999999977" fill="#FFFFFF" />
<line x1="350" y1="357.1" x2="750.6" y2="357.1" stroke="#ADADAD" stroke-width="1.1" />
<line x1="350.5" y1="356.6" x2="350.5" y2="368" stroke="#C4C4C4" stroke-width="1" />
<text x="353" y="364.8" textLength="15.75" lengthAdjust="spacingAndGlyphs" fill="#0a0a0a" style="font-size:7px;" stroke="#0a0a0a" stroke-width="0.18" >Login</text>
<rect x="751.8" y="356.8" width="11" height="11.4" fill="#DADADA" stroke="#6E6E6E" stroke-width="1" rx="1.2"/>
<rect x="754" y="359.6" width="6.8" height="6.2" fill="#FFFFFF" stroke="#8A8A8A" stroke-width="0.4" />
<rect x="754" y="359.4" width="6.8" height="1.2" fill="#6A7A9A" />
<rect x="755.3" y="362.6" width="0.9" height="1.3" fill="#222" />
<rect x="757.0" y="362.6" width="0.9" height="1.3" fill="#222" />
<rect x="758.6999999999999" y="362.6" width="0.9" height="1.3" fill="#222" />
<rect x="776.4" y="356.8" width="8.2" height="11.4" fill="#FAFAFA" stroke="#4A4A4A" stroke-width="1" rx="1.2"/>
<line x1="777.6" y1="358.4" x2="777.6" y2="366.8" stroke="#333" stroke-width="0.8" />
<circle cx="779.6" cy="362.6" r="1.1" fill="#1E2EE0"/>
<path d="M778 359 L779.6 359 M778 366.4 L779.6 366.4" fill="none" stroke="#2E8A4A" stroke-width="0.7" />
<text x="284.75" y="382.6" textLength="63.65" lengthAdjust="spacingAndGlyphs" fill="#0a0a0a" style="font-size:7px;" stroke="#0a0a0a" stroke-width="0.18" >Bedingung überprüfen:</text>
<rect x="350.5" y="375.5" width="180.60000000000002" height="10.199999999999989" fill="#FFFFFF" stroke="#C4D0F2" stroke-width="1" />
<text x="547.3" y="382.8" textLength="18.2" lengthAdjust="spacingAndGlyphs" fill="#0a0a0a" style="font-size:7px;" stroke="#0a0a0a" stroke-width="0.18" >setzen:</text>
<rect x="568.8" y="375.5" width="195.20000000000005" height="10.199999999999989" fill="#FFFFFF" stroke="#C4D0F2" stroke-width="1" />
<text x="303.75" y="397.6" textLength="43.25" lengthAdjust="spacingAndGlyphs" fill="#0a0a0a" style="font-size:7px;" stroke="#0a0a0a" stroke-width="0.18" >Vor Ausführung:</text>
<rect x="350" y="390" width="397" height="11.199999999999989" fill="#FFFFFF" />
<line x1="350" y1="390.5" x2="747" y2="390.5" stroke="#ADADAD" stroke-width="1.1" />
<line x1="350.5" y1="390" x2="350.5" y2="401.2" stroke="#C4C4C4" stroke-width="1" />
<text x="353.75" y="397.7" textLength="105.0" lengthAdjust="spacingAndGlyphs" fill="#6E6E6E" style="font-size:7px;font-style:italic;" stroke="#6E6E6E" stroke-width="0.18" >Aktion hier ablegen (per Drag &amp; Drop)</text>
<rect x="757.2" y="391.4" width="8" height="8.6" fill="#FFFFFF" stroke="#4A4A4A" stroke-width="0.9" rx="0.6"/>
<rect x="757.2" y="391.4" width="8" height="1.8" fill="#5A6C9C" stroke="#3A4A78" stroke-width="0.4" />
<line x1="757.2" y1="396.4" x2="765.2" y2="396.4" stroke="#555" stroke-width="0.8" />
<text x="298.75" y="412.6" textLength="48.25" lengthAdjust="spacingAndGlyphs" fill="#0a0a0a" style="font-size:7px;" stroke="#0a0a0a" stroke-width="0.18" >Nach Ausführung:</text>
<rect x="350" y="405" width="397" height="11.199999999999989" fill="#FFFFFF" />
<line x1="350" y1="405.5" x2="747" y2="405.5" stroke="#ADADAD" stroke-width="1.1" />
<line x1="350.5" y1="405" x2="350.5" y2="416.2" stroke="#C4C4C4" stroke-width="1" />
<text x="353.75" y="412.8" textLength="105.0" lengthAdjust="spacingAndGlyphs" fill="#6E6E6E" style="font-size:7px;font-style:italic;" stroke="#6E6E6E" stroke-width="0.18" >Aktion hier ablegen (per Drag &amp; Drop)</text>
<rect x="757.2" y="406.4" width="8" height="8.6" fill="#FFFFFF" stroke="#4A4A4A" stroke-width="0.9" rx="0.6"/>
<rect x="757.2" y="406.4" width="8" height="1.8" fill="#5A6C9C" stroke="#3A4A78" stroke-width="0.4" />
<line x1="757.2" y1="411.4" x2="765.2" y2="411.4" stroke="#555" stroke-width="0.8" />
<text x="302" y="457.4" textLength="45" lengthAdjust="spacingAndGlyphs" fill="#0a0a0a" style="font-size:7px;" stroke="#0a0a0a" stroke-width="0.18" >Log-Aufbereiter:</text>
<rect x="350" y="449" width="414" height="11.399999999999977" fill="#FFFFFF" />
<line x1="350" y1="449.5" x2="764" y2="449.5" stroke="#ADADAD" stroke-width="1.1" />
<line x1="350.5" y1="449" x2="350.5" y2="460.4" stroke="#C4C4C4" stroke-width="1" />
<text x="353" y="457.3" textLength="129.5" lengthAdjust="spacingAndGlyphs" fill="#6E6E6E" style="font-size:7px;font-style:italic;" stroke="#6E6E6E" stroke-width="0.18" >Log-Aufbereiter hier ablegen (per Drag &amp; Drop)</text>
<text x="291" y="476.4" textLength="55.4" lengthAdjust="spacingAndGlyphs" fill="#0a0a0a" style="font-size:7px;" stroke="#0a0a0a" stroke-width="0.18" >Laufzeitbegrenzung:</text>
<rect x="350.5" y="468.8" width="35.5" height="10.199999999999989" fill="#FFFFFF" stroke="#C4D0F2" stroke-width="1" />
<text x="391" y="476.4" textLength="6" lengthAdjust="spacingAndGlyphs" fill="#0a0a0a" style="font-size:7px;" stroke="#0a0a0a" stroke-width="0.18" >[s]</text>
<text x="401" y="476.4" textLength="57.75" lengthAdjust="spacingAndGlyphs" fill="#0a0a0a" style="font-size:7px;" stroke="#0a0a0a" stroke-width="0.18" >(Leer für unbegrenzt)</text>
<text x="316.4" y="490.6" textLength="31.2" lengthAdjust="spacingAndGlyphs" fill="#0a0a0a" style="font-size:7px;" stroke="#0a0a0a" stroke-width="0.18" >Notwendig:</text>
<rect x="350.5" y="483.8" width="76.39999999999998" height="10.0" fill="#FFFFFF" stroke="#C4D0F2" stroke-width="1" />
<line x1="417.3" y1="484.4" x2="417.3" y2="493.4" stroke="#E4E4E4" stroke-width="1" />
<path d="M420.2 488.2 L423.0 488.2 L421.59999999999997 490.0 Z" fill="#333" />
<text x="353" y="490.6" textLength="35" lengthAdjust="spacingAndGlyphs" fill="#0a0a0a" style="font-size:7px;" stroke="#0a0a0a" stroke-width="0.18" >obligatorisch</text>
<text x="665.25" y="491" textLength="85.35" lengthAdjust="spacingAndGlyphs" fill="#0a0a0a" style="font-size:7px;" stroke="#0a0a0a" stroke-width="0.18" >Voreinstellung der Ausführung:</text>
<rect x="755.2" y="485.4" width="6.2" height="7.2" fill="#EEF0F8" stroke="#A4ACC8" stroke-width="0.8" />
<path d="M756.8 488.8 L758 490.8 L760.2 486.6" fill="none" stroke="#1E2E9A" stroke-width="1.1" />
<clipPath id="cut"><rect x="246" y="480" width="548" height="23"/></clipPath>
<g clip-path="url(#cut)">
<text x="311" y="505.2" textLength="36" lengthAdjust="spacingAndGlyphs" fill="#0a0a0a" style="font-size:7px;" stroke="#0a0a0a" stroke-width="0.18" >Testgruppen:</text>
<rect x="350.5" y="497.3" width="413.29999999999995" height="10.199999999999989" fill="#FFFFFF" stroke="#C4D0F2" stroke-width="1" />
</g>
<rect x="785.8" y="341" width="7.4" height="161" fill="#F0F0F0" />
<line x1="785.6" y1="341" x2="785.6" y2="502" stroke="#F8F8F8" stroke-width="1" />
<rect x="786.2" y="350.4" width="6.8" height="115.2" fill="#CDCDCD" />
<path d="M787.8 346.6 L791.4 346.6 L789.6 344.4 Z" fill="#444" />
<path d="M787.8 496.4 L791.4 496.4 L789.6 498.6 Z" fill="#444" />
<line x1="244.2" y1="503.7" x2="795.2" y2="503.7" stroke="#A4A4A4" stroke-width="1.7" />
<rect x="453.4" y="506.2" width="64" height="11.2" fill="#EFEFEF" stroke="#6C6C6C" stroke-width="1" />
<rect x="521.2" y="506.2" width="64" height="11.2" fill="#EFEFEF" stroke="#6C6C6C" stroke-width="1" />
<text x="468" y="513.5" textLength="35.2" lengthAdjust="spacingAndGlyphs" fill="#0a0a0a" style="font-size:7px;" stroke="#0a0a0a" stroke-width="0.18" >Übernehmen</text>
<text x="539.5" y="513.5" textLength="27.5" lengthAdjust="spacingAndGlyphs" fill="#0a0a0a" style="font-size:7px;" stroke="#0a0a0a" stroke-width="0.18" >Verwerfen</text>
<rect x="4" y="520.5" width="792" height="13" fill="#F0F0F0" />
<line x1="4" y1="520.9" x2="386" y2="520.9" stroke="#C0C0C0" stroke-width="1.5" />
<line x1="4" y1="522.2" x2="386" y2="522.2" stroke="#F8F8F8" stroke-width="1" />
<line x1="391" y1="520.9" x2="787" y2="520.9" stroke="#C0C0C0" stroke-width="1.5" />
<line x1="391.5" y1="522.2" x2="787" y2="522.2" stroke="#F8F8F8" stroke-width="1" />
<line x1="386.3" y1="521" x2="386.3" y2="533.5" stroke="#FFFFFF" stroke-width="1" />
<line x1="391" y1="521" x2="391" y2="533.5" stroke="#C4C4C4" stroke-width="1" />
<text x="6.9" y="529" textLength="76.85" lengthAdjust="spacingAndGlyphs" fill="#0a0a0a" style="font-size:6.4px;" stroke="#0a0a0a" stroke-width="0.18" >Letzte Aktion: Neuer Testfall</text>
<text x="394" y="529" textLength="41" lengthAdjust="spacingAndGlyphs" fill="#0a0a0a" style="font-size:7px;" stroke="#0a0a0a" stroke-width="0.18" >Webseiten Test</text>
<text x="437" y="529" textLength="30.5" lengthAdjust="spacingAndGlyphs" fill="#000" style="font-size:7px;font-weight:bold;" >[geändert]</text>
<line x1="760.5" y1="521" x2="760.5" y2="533.5" stroke="#C8C8C8" stroke-width="1" />
<line x1="761.5" y1="521" x2="761.5" y2="533.5" stroke="#FFFFFF" stroke-width="1" />
<line x1="774.7" y1="521" x2="774.7" y2="533.5" stroke="#C8C8C8" stroke-width="1" />
<line x1="775.7" y1="521" x2="775.7" y2="533.5" stroke="#FFFFFF" stroke-width="1" />
<line x1="787" y1="521" x2="787" y2="533.5" stroke="#C8C8C8" stroke-width="1" />
<line x1="788" y1="521" x2="788" y2="533.5" stroke="#FFFFFF" stroke-width="1" />
<circle cx="767.4" cy="527.2" r="3.2" fill="#F4F4F4" stroke="#A8A8A8" stroke-width="0.8"/>
<line x1="764.4" y1="527.4" x2="770.4" y2="527.4" stroke="#B0B0B0" stroke-width="0.8" />
<rect x="0" y="533.7" width="800" height="4.3" fill="#F0C869" />
<rect x="796" y="0" width="4" height="538" fill="#F0C869" />
<rect x="0" y="0" width="4" height="538" fill="#F0C869" />
<line x1="795.6" y1="16" x2="795.6" y2="533.5" stroke="#F6F6F6" stroke-width="0.8" />
<line x1="0" y1="0.35" x2="800" y2="0.35" stroke="#D9B256" stroke-width="0.7" />
<line x1="0.35" y1="0" x2="0.35" y2="538" stroke="#D9B256" stroke-width="0.7" />
<line x1="799.65" y1="0" x2="799.65" y2="538" stroke="#D9B256" stroke-width="0.7" />
<line x1="0" y1="537.65" x2="800" y2="537.65" stroke="#D9B256" stroke-width="0.7" />
<line x1="4" y1="15.7" x2="796" y2="15.7" stroke="#E0B75C" stroke-width="0.7" />
<line x1="4" y1="534" x2="796" y2="534" stroke="#E0B75C" stroke-width="0.7" />
<line x1="4.1" y1="16" x2="4.1" y2="533.5" stroke="#E0B75C" stroke-width="0.5" />
<line x1="796" y1="16" x2="796" y2="533.5" stroke="#E0B75C" stroke-width="0.5" />
</svg>
</body>
</html>
